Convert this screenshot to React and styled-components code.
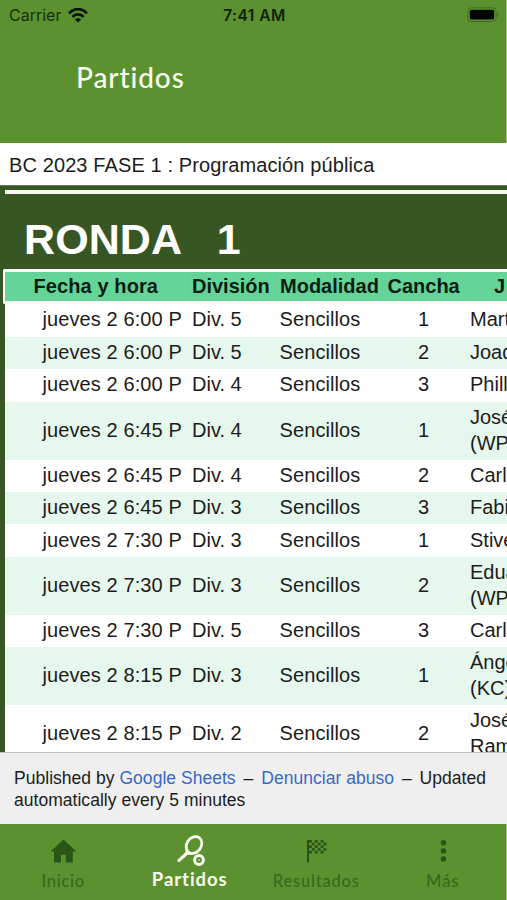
import React from "react";
import styled, { createGlobalStyle } from "styled-components";

const GlobalStyle = createGlobalStyle`
* { box-sizing: border-box; }
body {
  margin: 0;
  background: #fff;
}
`;

const Screen = styled.div`
width: 507px;
height: 900px;
display: flex;
flex-direction: column;
overflow: hidden;
font-family: "Liberation Sans", Arial, sans-serif;
color: #1c1c1c;
`;

const Header = styled.header`
height: 143px;
flex: none;
background: #5b922f;
border-right: 1px solid #9dbd84;
`;

const StatusBar = styled.div`
height: 30px;
display: grid;
grid-template-columns: 1fr auto 1fr;
align-items: center;
padding: 0 6px 0 9px;
font-family: Inter, sans-serif;
font-size: 16px;
color: #17300c;
`;

const Carrier = styled.div`
display: flex;
align-items: center;
gap: 7px;
`;

const Clock = styled.div`
font-weight: 600;
font-size: 15.5px;
letter-spacing: 0.5px;
color: #0f2108;
`;

const Battery = styled.svg`
justify-self: end;
margin-top: -1px;
`;

const ScreenTitle = styled.h1`
margin: 26.5px 0 0 76px;
font-family: Lato, sans-serif;
font-weight: 500;
font-size: 28px;
line-height: 40px;
letter-spacing: 0.9px;
color: #f8fdee;
`;

const DocTitle = styled.div`
height: 42px;
flex: none;
padding-left: 9px;
font-size: 20px;
line-height: 44px;
letter-spacing: 0.11px;
white-space: nowrap;
background: #fff;
`;

const Sheet = styled.main`
flex: 1;
min-height: 0;
padding-left: 5px;
background: #385624;
border-top: 1px solid #64785a;
overflow: hidden;
`;

const RoundTitle = styled.h2`
height: 78.5px;
margin: 4px 0 0 0;
padding: 8px 0 0 19px;
border-top: 4px solid #f5f9f0;
font-size: 43px;
line-height: 74px;
letter-spacing: 0.1px;
white-space: pre;
color: #fff;
`;

const Row = styled.div`
display: grid;
grid-template-columns: 182px 88px 107px 83px 160px;
align-items: center;
height: ${(props) => (props.$tall ? 57.9 : props.$first ? 33.4 : 32.4)}px;
background: ${(props) => (props.$shade ? "#e6f7ed" : "#fff")};
font-size: 20px;
line-height: 26px;
`;

const HeadRow = styled(Row)`
height: 35px;
margin-left: -2px;
padding-left: 2px;
grid-template-columns: 181px 88px 107px 83px 160px;
background: #66d398;
border: solid #f6fbf6;
border-width: 3px 0 3px 2px;
border-radius: 2px 0 0 2px;
font-weight: bold;
color: #071e10;
`;

const HeadCell = styled.div`
height: 100%;
padding-left: ${(props) => props.$pad}px;
border-right: 1px solid #62cf94;
line-height: 29px;
letter-spacing: ${(props) => props.$track || 0}px;
white-space: nowrap;
`;

const Cell = styled.div`
padding-left: ${(props) => props.$pad}px;
padding-bottom: 2px;
letter-spacing: ${(props) => props.$track || 0}px;
white-space: pre;
`;

const Published = styled.footer`
height: 72.5px;
flex: none;
padding: 14px;
border-top: 1px solid #c2c3c3;
background: #efefef;
font-size: 17.5px;
line-height: 22px;
letter-spacing: 0.03px;
white-space: nowrap;
`;

const Link = styled.a`
color: #3a68c8;
`;

const Dash = styled.span`
margin: 0 3px;
`;

const TabBar = styled.nav`
height: 76px;
flex: none;
display: grid;
grid-template-columns: repeat(4, 1fr);
background: #5b922f;
border-right: 1px solid #9dbd84;
`;

const Tab = styled.div`
display: flex;
flex-direction: column;
align-items: center;
padding-top: ${(props) => (props.$active ? 10 : 12.5)}px;
font-family: Lato, sans-serif;
font-size: ${(props) => (props.$active ? 18.5 : 16.5)}px;
font-weight: ${(props) => (props.$active ? 700 : 500)};
line-height: 22px;
letter-spacing: ${(props) => props.$track}px;
color: ${(props) => (props.$active ? "#f8fdee" : "#38691f")};
svg {
  display: block;
  height: ${(props) => (props.$active ? 34 : 33)}px;
  color: ${(props) => (props.$active ? "#f8fdee" : "#2b5518")};
}
`;

const WifiIcon = () => (
    <svg width="20" height="15" viewBox="0 0 20 15" fill="none" stroke="#07140a" strokeWidth="2.7">
        <path d="M1 5.4C6-0.3 14-0.3 19 5.4" />
        <path d="M4.4 9C7.5 5.5 12.5 5.5 15.6 9" />
        <path d="M10 14.6L6.9 11.4Q10 8.4 13.1 11.4Z" fill="#07140a" stroke="none" />
    </svg>
);

const BatteryIcon = () => (
    <Battery width="33" height="16" viewBox="0 0 33 16">
        <rect x="0.8" y="0.8" width="28.4" height="13.8" rx="3.6" fill="none" stroke="#3f6b24" strokeWidth="1" />
        <rect x="2.8" y="2.7" width="24.3" height="9.8" rx="1.8" fill="#020502" />
        <path d="M30.8 5.2Q33 7.7 30.8 10.2Z" fill="#3f6b24" />
    </Battery>
);

const HomeIcon = () => (
    <svg width="34" height="33" viewBox="0 0 34 33" fill="currentColor">
        <path d="M17.5 2.6L30.4 14.4H26.8V25.4H19.8V17.8H15V25.4H8V14.4H4.6Z" />
    </svg>
);

const RacketIcon = () => (
    <svg width="34" height="34" viewBox="0 0 34 34" fill="none" stroke="currentColor">
        <ellipse cx="21" cy="11" rx="7.2" ry="9" transform="rotate(35 21 11)" strokeWidth="2.7" />
        <path d="M13.9 14.9Q13.9 18.4 12.6 20Q15 19 19.2 19.8" strokeWidth="2.4" strokeLinejoin="round" />
        <path d="M12.8 20.2L6 26.4" strokeWidth="3.2" strokeLinecap="round" />
        <circle cx="26" cy="26" r="4.4" strokeWidth="3" />
        <circle cx="26" cy="26" r="0.8" fill="currentColor" stroke="none" />
    </svg>
);

const squares = [];
for (let y = 0; y < 5; y++) {
    for (let x = 0; x < 6; x++) {
        if ((x + y) % 2 === 0) squares.push([x, y]);
    }
}

const FlagIcon = () => (
    <svg width="34" height="33" viewBox="0 0 34 33" fill="currentColor">
        <rect x="8" y="2.8" width="2" height="22.7" />
        {squares.map(([x, y]) => (
            <rect key={`${x}-${y}`} x={10 + x * 2.9} y={3 + y * 2.7} width="2.9" height="2.7" />
        ))}
    </svg>
);

const MoreIcon = () => (
    <svg width="34" height="33" viewBox="0 0 34 33" fill="currentColor">
        <circle cx="17.5" cy="5.8" r="2.7" />
        <circle cx="17.5" cy="13.9" r="2.7" />
        <circle cx="17.5" cy="22" r="2.7" />
    </svg>
);

const matches = [
    { time: "6:00", division: 5, court: 1, player: "Mart" },
    { time: "6:00", division: 5, court: 2, player: "Joaq" },
    { time: "6:00", division: 4, court: 3, player: "Phill" },
    { time: "6:45", division: 4, court: 1, player: "José\n(WP)" },
    { time: "6:45", division: 4, court: 2, player: "Carl" },
    { time: "6:45", division: 3, court: 3, player: "Fabi" },
    { time: "7:30", division: 3, court: 1, player: "Stive" },
    { time: "7:30", division: 3, court: 2, player: "Edua\n(WP)" },
    { time: "7:30", division: 5, court: 3, player: "Carl" },
    { time: "8:15", division: 3, court: 1, player: "Ánge\n(KC)" },
    { time: "8:15", division: 2, court: 2, player: "José\nRam" },
];

const App = () => {
    return (
        <Screen>
            <GlobalStyle />
            <Header>
                <StatusBar>
                    <Carrier>Carrier <WifiIcon /></Carrier>
                    <Clock>7:41 AM</Clock>
                    <BatteryIcon />
                </StatusBar>
                <ScreenTitle>Partidos</ScreenTitle>
            </Header>
            <DocTitle>BC 2023 FASE 1 : Programación pública</DocTitle>
            <Sheet>
                <RoundTitle>{"RONDA   1"}</RoundTitle>
                <HeadRow>
                    <HeadCell $pad={26.5} $track={0.1}>Fecha y hora</HeadCell>
                    <HeadCell $pad={4}>División</HeadCell>
                    <HeadCell $pad={4}>Modalidad</HeadCell>
                    <HeadCell $pad={4.5}>Cancha</HeadCell>
                    <HeadCell $pad={28}>J</HeadCell>
                </HeadRow>
                {matches.map((match, index) => (
                    <Row key={index} $first={index === 0} $shade={index % 2 === 1} $tall={match.player.includes("\n")}>
                        <Cell $pad={37.5} $track={0.1}>jueves 2 {match.time} P</Cell>
                        <Cell $pad={5}>Div. {match.division}</Cell>
                        <Cell $pad={4.5} $track={0.1}>Sencillos</Cell>
                        <Cell $pad={36}>{match.court}</Cell>
                        <Cell $pad={5}>{match.player}</Cell>
                    </Row>
                ))}
            </Sheet>
            <Published>
                Published by <Link>Google Sheets</Link> <Dash>–</Dash> <Link>Denunciar abuso</Link> <Dash>–</Dash> Updated<br />
                automatically every 5 minutes
            </Published>
            <TabBar>
                <Tab $track={0.7}><HomeIcon />Inicio</Tab>
                <Tab $active $track={0.95}><RacketIcon />Partidos</Tab>
                <Tab $track={0.8}><FlagIcon />Resultados</Tab>
                <Tab $track={0.9}><MoreIcon />Más</Tab>
            </TabBar>
        </Screen>
    );
};

export default App;
